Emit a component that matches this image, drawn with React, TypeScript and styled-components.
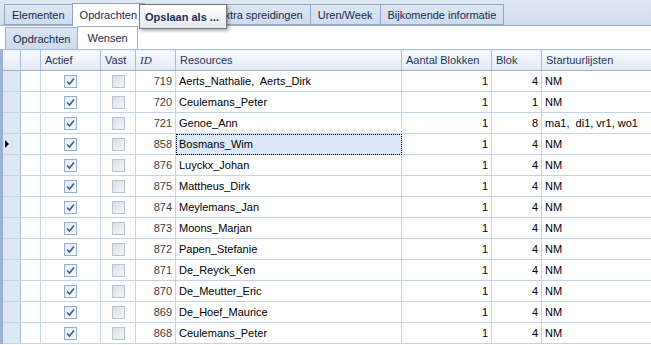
import styled, { createGlobalStyle } from 'styled-components';

type Row = {
  id: number;
  resource: string;
  blokken: number;
  blok: number;
  start: string;
};

const rows: Row[] = [
  { id: 719, resource: 'Aerts_Nathalie,  Aerts_Dirk', blokken: 1, blok: 4, start: 'NM' },
  { id: 720, resource: 'Ceulemans_Peter', blokken: 1, blok: 1, start: 'NM' },
  { id: 721, resource: 'Genoe_Ann', blokken: 1, blok: 8, start: 'ma1,  di1, vr1, wo1' },
  { id: 858, resource: 'Bosmans_Wim', blokken: 1, blok: 4, start: 'NM' },
  { id: 876, resource: 'Luyckx_Johan', blokken: 1, blok: 4, start: 'NM' },
  { id: 875, resource: 'Mattheus_Dirk', blokken: 1, blok: 4, start: 'NM' },
  { id: 874, resource: 'Meylemans_Jan', blokken: 1, blok: 4, start: 'NM' },
  { id: 873, resource: 'Moons_Marjan', blokken: 1, blok: 4, start: 'NM' },
  { id: 872, resource: 'Papen_Stefanie', blokken: 1, blok: 4, start: 'NM' },
  { id: 871, resource: 'De_Reyck_Ken', blokken: 1, blok: 4, start: 'NM' },
  { id: 870, resource: 'De_Meutter_Eric', blokken: 1, blok: 4, start: 'NM' },
  { id: 869, resource: 'De_Hoef_Maurice', blokken: 1, blok: 4, start: 'NM' },
  { id: 868, resource: 'Ceulemans_Peter', blokken: 1, blok: 4, start: 'NM' },
];

const selectedId = 858;

const Checkbox = ({ checked }: { checked: boolean }) => (
  <Box $checked={checked}>
    {checked && (
      <svg width="9" height="9" viewBox="0 0 9 9">
        <path d="M1 4.5 L3.5 7 L8 1.5" fill="none" stroke="#3e5f8c" strokeWidth="1.6" />
      </svg>
    )}
  </Box>
);

export const App = (): React.ReactElement => {
  return (
    <>
      <GlobalStyle />
      <Page>
        <TopTabBar>
          <TopTab>Elementen</TopTab>
          <TopTab $active>Opdrachten</TopTab>
          <TopTab $w={66} />
          <TopTab>Extra spreidingen</TopTab>
          <TopTab>Uren/Week</TopTab>
          <TopTab>Bijkomende informatie</TopTab>
          <Tooltip>Opslaan als ...</Tooltip>
        </TopTabBar>
        <SubTabBar>
          <SubTab>Opdrachten</SubTab>
          <SubTab $active>Wensen</SubTab>
        </SubTabBar>
        <Grid>
          <colgroup>
            <col style={{ width: 19 }} />
            <col style={{ width: 20 }} />
            <col style={{ width: 60 }} />
            <col style={{ width: 35 }} />
            <col style={{ width: 40 }} />
            <col style={{ width: 226 }} />
            <col style={{ width: 90 }} />
            <col style={{ width: 50 }} />
            <col style={{ width: 110 }} />
          </colgroup>
          <thead>
            <tr>
              <HeadIndicator />
              <Head />
              <Head>Actief</Head>
              <Head>Vast</Head>
              <Head $italic>ID</Head>
              <Head>Resources</Head>
              <Head>Aantal Blokken</Head>
              <Head>Blok</Head>
              <Head>Startuurlijsten</Head>
            </tr>
          </thead>
          <tbody>
            {rows.map((row) => (
              <tr key={row.id}>
                <Indicator>{row.id === selectedId && <Arrow />}</Indicator>
                <Cell />
                <Cell $align="center">
                  <Checkbox checked />
                </Cell>
                <Cell $align="center">
                  <Checkbox checked={false} />
                </Cell>
                <Cell $align="right" $muted>
                  {row.id}
                </Cell>
                <Cell $focused={row.id === selectedId}>{row.resource}</Cell>
                <Cell $align="right">{row.blokken}</Cell>
                <Cell $align="right">{row.blok}</Cell>
                <Cell>{row.start}</Cell>
              </tr>
            ))}
          </tbody>
        </Grid>
      </Page>
    </>
  );
};

const GlobalStyle = createGlobalStyle`
  body {
    margin: 0;
    background: #ffffff;
    font-family: "Liberation Sans", Arial, sans-serif;
  }
`;

const Page = styled.div`
  position: relative;
  width: 651px;
  height: 345px;
  overflow: hidden;
  background: #ffffff;
  font-size: 11px;
  color: #000000;
`;

const TopTabBar = styled.div`
  position: relative;
  display: flex;
  align-items: flex-end;
  height: 26px;
  padding-left: 4px;
  box-sizing: border-box;
  background: linear-gradient(#dfe7f1, #d2deed);
  border-bottom: 1px solid #99aecb;
`;

const TopTab = styled.div<{ $active?: boolean; $w?: number }>`
  height: ${(p) => (p.$active ? '23px' : '21px')};
  margin-bottom: ${(p) => (p.$active ? '-1px' : '0')};
  width: ${(p) => (p.$w ? `${p.$w}px` : 'auto')};
  padding: 0 7px;
  box-sizing: border-box;
  display: flex;
  align-items: center;
  color: #15294b;
  background: ${(p) => (p.$active ? '#ffffff' : 'linear-gradient(#dde6f2, #cfdcee)')};
  border: 1px solid #93a8c6;
  border-bottom: ${(p) => (p.$active ? 'none' : '1px solid #93a8c6')};
  margin-right: -1px;
  white-space: nowrap;
`;

const Tooltip = styled.div`
  position: absolute;
  left: 139px;
  top: 4px;
  width: 88px;
  height: 25px;
  box-sizing: border-box;
  display: flex;
  align-items: center;
  padding-left: 5px;
  font-weight: bold;
  font-size: 11px;
  white-space: nowrap;
  color: #1b2f52;
  background: linear-gradient(#ffffff, #e6e8f0);
  border: 1px solid #767676;
  box-shadow: 2px 2px 3px rgba(0, 0, 0, 0.3);
`;

const SubTabBar = styled.div`
  display: flex;
  align-items: flex-end;
  height: 23px;
  padding-left: 5px;
  box-sizing: border-box;
  background: #ffffff;
`;

const SubTab = styled.div<{ $active?: boolean }>`
  height: ${(p) => (p.$active ? '23px' : '22px')};
  padding: 0 ${(p) => (p.$active ? '9px' : '7px')};
  box-sizing: border-box;
  display: flex;
  align-items: center;
  color: #15294b;
  background: ${(p) => (p.$active ? '#ffffff' : 'linear-gradient(#dbe5f2, #cddbed)')};
  border: 1px solid #9db1cf;
  border-bottom: none;
  margin-right: -1px;
  white-space: nowrap;
`;

const Grid = styled.table`
  table-layout: fixed;
  border-collapse: collapse;
  width: 651px;
  border-right: 1px solid #b9cde8;
`;

const Head = styled.th<{ $italic?: boolean }>`
  height: 20px;
  padding: 0 4px;
  text-align: left;
  font-weight: normal;
  font-size: 11px;
  color: #1e3557;
  font-family: ${(p) => (p.$italic ? '"Liberation Serif", serif' : 'inherit')};
  font-style: ${(p) => (p.$italic ? 'italic' : 'normal')};
  background: linear-gradient(#f7f9fd, #e2eaf6);
  border: 1px solid #a7bdd8;
  border-bottom: 1px solid #98b1cf;
  white-space: nowrap;
`;

const HeadIndicator = styled(Head)`
  border-left: 3px solid #9db2d1;
  padding: 0;
`;

const Indicator = styled.td`
  height: 20px;
  padding: 0;
  background: #dee7f5;
  border-left: 3px solid #9db2d1;
  border-top: 1px solid #c3d4eb;
  border-bottom: 1px solid #c3d4eb;
  border-right: 1px solid #a9bfdb;
  vertical-align: middle;
`;

const Arrow = styled.span`
  display: block;
  width: 0;
  height: 0;
  margin-left: 2px;
  border-top: 4px solid transparent;
  border-bottom: 4px solid transparent;
  border-left: 4px solid #000000;
`;

const Cell = styled.td<{ $align?: 'left' | 'right' | 'center'; $muted?: boolean; $focused?: boolean }>`
  height: 20px;
  padding: 0 3px;
  text-align: ${(p) => p.$align || 'left'};
  color: ${(p) => (p.$muted ? '#45403c' : '#000000')};
  background: ${(p) => (p.$focused ? '#dce8f8' : '#ffffff')};
  border: 1px solid #c3d4eb;
  outline: ${(p) => (p.$focused ? '1px dotted #000000' : 'none')};
  outline-offset: -1px;
  white-space: pre;
  overflow: hidden;
  vertical-align: middle;
`;

const Box = styled.span<{ $checked: boolean }>`
  display: inline-flex;
  align-items: center;
  justify-content: center;
  vertical-align: middle;
  width: 13px;
  height: 13px;
  box-sizing: border-box;
  border: 1px solid ${(p) => (p.$checked ? '#9aafcb' : '#b7c3d3')};
  background: ${(p) =>
    p.$checked ? 'linear-gradient(135deg, #e4ebf5, #f8fafd)' : 'linear-gradient(135deg, #dcdee2, #f6f6f7)'};
`;

export default App;
